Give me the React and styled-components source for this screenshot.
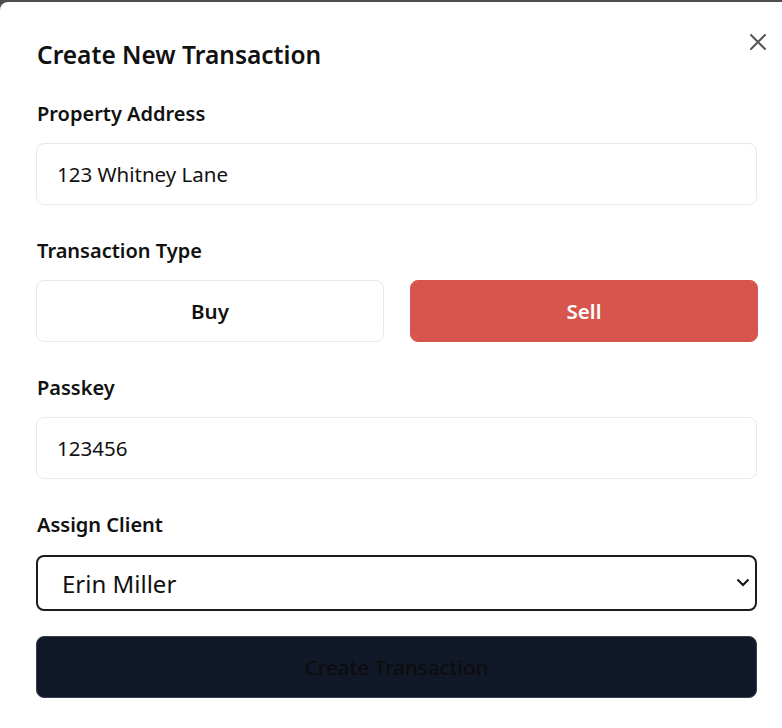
import React from "react";
import styled, { createGlobalStyle } from "styled-components";

const Global = createGlobalStyle`
  html, body {
    margin: 0;
    padding: 0;
    background: #4d4d4d;
    overflow: hidden;
  }
  body {
    font-family: "Noto Sans", "Open Sans", "Liberation Sans", sans-serif;
    color: #111111;
  }
  * { box-sizing: border-box; }
`;

const Page = styled.div`
  padding-top: 2px;
  width: 782px;
  height: 728px;
  overflow: hidden;
`;

const Modal = styled.div`
  position: relative;
  width: 794px;
  min-height: 760px;
  background: #ffffff;
  border-radius: 8px 8px 0 0;
  padding: 37px 37px 40px 36px;
`;

const CloseButton = styled.button`
  position: absolute;
  top: 28px;
  left: 746px;
  width: 24px;
  height: 24px;
  padding: 0;
  border: none;
  background: transparent;
  display: flex;
  align-items: center;
  justify-content: center;
  cursor: pointer;
`;

const Title = styled.h2`
  margin: 0 0 30px 1px;
  font-size: 24.5px;
  line-height: 32px;
  font-weight: 600;
  color: #111111;
`;

const Field = styled.div`
  display: flex;
  flex-direction: column;
  gap: ${(p) => p.$gap ?? 16}px;
  margin-bottom: ${(p) => p.$mb ?? 33}px;
`;

const Label = styled.label`
  display: block;
  margin-left: 1px;
  font-size: 20px;
  line-height: 26px;
  font-weight: 600;
  color: #111111;
`;

const TextInput = styled.input`
  width: 721px;
  height: 62px;
  padding: 0 20px;
  border: 1px solid #e8e8e8;
  border-radius: 8px;
  background: #ffffff;
  font-family: inherit;
  font-size: 20.5px;
  color: #111111;
  outline: none;
`;

const TypeRow = styled.div`
  display: grid;
  grid-template-columns: 348px 348px;
  column-gap: 26px;
  width: 721px;
`;

const TypeButton = styled.button`
  height: 62px;
  border-radius: 8px;
  border: 1px solid ${(p) => (p.$active ? "#d7554d" : "#e8e8e8")};
  background: ${(p) => (p.$active ? "#d7554d" : "#ffffff")};
  color: ${(p) => (p.$active ? "#ffffff" : "#111111")};
  font-family: inherit;
  font-size: 20.5px;
  font-weight: 600;
  cursor: pointer;
`;

const SelectWrap = styled.div`
  position: relative;
  width: 721px;
  height: 56px;
`;

const Select = styled.select`
  appearance: none;
  -webkit-appearance: none;
  width: 100%;
  height: 100%;
  padding: 0 40px 0 24px;
  border: 2px solid #1c1c1c;
  border-radius: 8px;
  background: #ffffff;
  font-family: inherit;
  font-size: 24px;
  color: #111111;
  outline: none;
`;

const Chevron = styled.svg`
  position: absolute;
  top: 23px;
  right: 7px;
  pointer-events: none;
`;

const Submit = styled.button`
  width: 721px;
  height: 62px;
  border: 1px solid #3a3f52;
  border-radius: 8px;
  background: #111827;
  color: #0d0d0d;
  font-family: inherit;
  font-size: 20.5px;
  font-weight: 500;
  cursor: pointer;
`;

export default function App() {
  return (
    <>
      <Global />
      <Page>
        <Modal>
          <CloseButton aria-label="Close">
            <svg width="18" height="18" viewBox="0 0 18 18" fill="none">
              <path d="M2 2L16 16M16 2L2 16" stroke="#555555" strokeWidth="2" strokeLinecap="round" />
            </svg>
          </CloseButton>
          <Title>Create New Transaction</Title>
          <Field>
            <Label>Property Address</Label>
            <TextInput defaultValue="123 Whitney Lane" />
          </Field>
          <Field>
            <Label>Transaction Type</Label>
            <TypeRow>
              <TypeButton>Buy</TypeButton>
              <TypeButton $active>Sell</TypeButton>
            </TypeRow>
          </Field>
          <Field>
            <Label>Passkey</Label>
            <TextInput defaultValue="123456" />
          </Field>
          <Field $mb={25} $gap={17}>
            <Label>Assign Client</Label>
            <SelectWrap>
              <Select defaultValue="erin">
                <option value="erin">Erin Miller</option>
                <option value="john">John Smith</option>
              </Select>
              <Chevron width="14" height="9" viewBox="0 0 14 9" fill="none">
                <path d="M1.5 1.5L7 7L12.5 1.5" stroke="#111111" strokeWidth="2" />
              </Chevron>
            </SelectWrap>
          </Field>
          <Submit>Create Transaction</Submit>
        </Modal>
      </Page>
    </>
  );
}
